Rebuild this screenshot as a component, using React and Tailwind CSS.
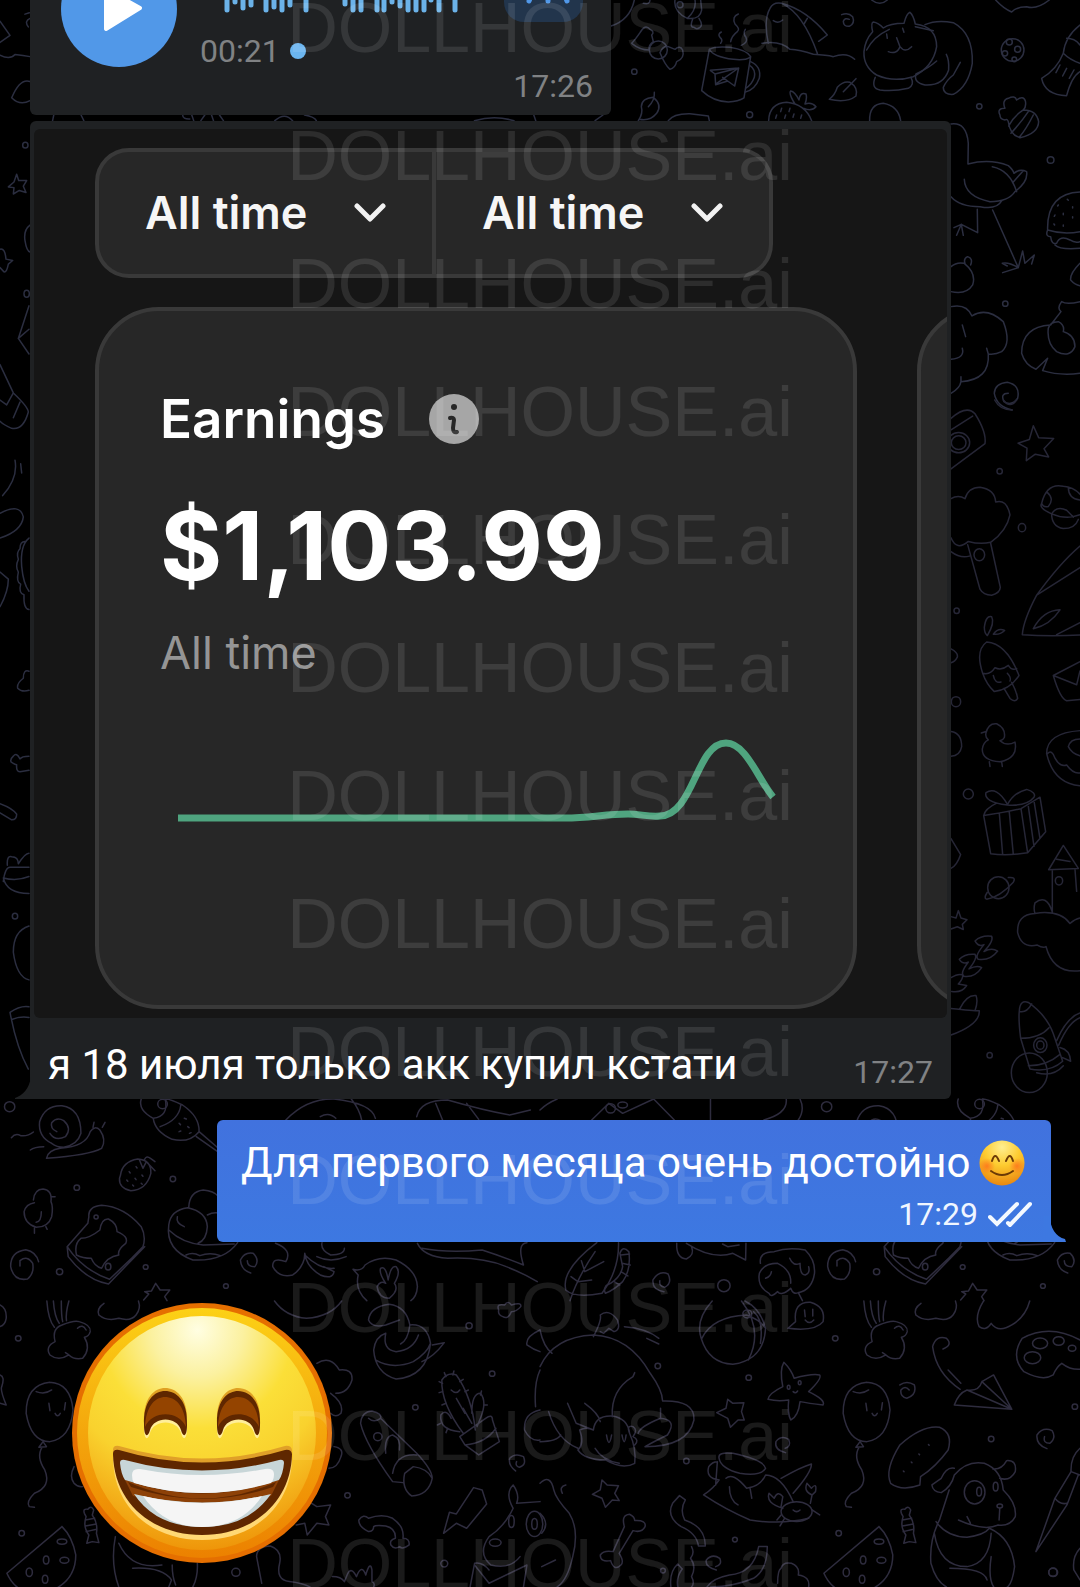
import React, { useState } from 'react';

// Wallpaper doodles, one sheet per area of the chat background
const topSheet = {
  paths: [
    'M725 44 Q745 36 758 50 Q766 70 748 79 Q730 80 730 64 Q735 52 748 58',
    'M95 130 Q105 120 120 98 Q135 70 150 88 Q165 95 155 105 L160 125 Q145 135 147 150 Q120 150 95 130Z',
    'M180 158 Q190 135 205 140 L225 148 Q240 135 248 150 Q255 175 230 185 Q225 205 210 208 Q195 195 180 158Z',
    'M328 148 L305 272 Q340 305 385 306 Q415 305 432 294 L452 170 Q440 150 390 142 Q345 138 328 148 Q340 170 400 178 Q435 182 450 172',
    'M452 185 Q485 200 478 235 Q465 270 436 276 M449 196 Q468 208 463 232 Q455 255 438 264',
    'M331 211 L416 204 L404 258 L383 243 L347 254 L345 222Z M345 222 L416 204 L350 250 M368 232 L383 243',
    'M362 130 Q370 120 360 112 Q352 102 364 96 M392 125 Q395 108 412 95 Q422 88 405 72 Q395 50 415 42 M424 136 Q445 128 438 112 Q428 100 436 88',
    'M505 130 Q490 60 510 25 Q520 5 545 10 Q610 40 652 160 M545 10 Q620 30 682 105 L656 124 M612 72 L622 55 M486 130 Q540 120 570 148 Q600 150 640 163 Q680 165 700 170 Q740 155 764 178 M520 62 Q535 72 548 60',
    'M818 95 Q812 68 820 66 Q835 68 850 84 Q870 70 912 70 Q920 40 930 37 Q940 45 946 72 Q1010 80 1010 140 Q1000 200 940 230 Q880 248 830 225 Q790 200 792 155 Q795 120 818 95',
    'M975 74 Q1010 58 1060 68 Q1120 100 1117 190 Q1105 260 1060 283 Q1030 285 1030 262 Q1040 240 1060 225 L1081 187 M1010 183 Q985 205 948 222 Q940 248 975 255 Q1030 258 1046 210 Q1048 180 1039 163',
    'M826 232 Q812 265 840 270 Q880 275 925 265 Q945 255 933 232 M890 113 L900 140 Q890 165 865 155 M900 140 Q915 160 935 140 M860 102 L862 115 M908 85 L912 97 M800 150 Q820 110 868 88 M946 80 L1000 92',
    'M1440 75 Q1395 110 1390 160 Q1370 210 1325 235 Q1335 285 1400 287 Q1415 230 1440 215 M1400 115 Q1425 115 1440 135 M1390 160 Q1410 180 1440 190 M1380 195 L1368 218 M1400 205 L1388 228 M1422 210 L1408 235',
    'M1187 0 Q1210 25 1235 36 Q1250 20 1280 20 Q1310 30 1348 0 M815 0 Q840 20 862 0 M33 78 Q90 60 103 0 M130 10 Q150 15 150 0',
    'M225 0 Q220 35 262 55 Q300 60 305 30 L302 0 M262 55 Q290 30 285 0 M278 58 Q268 82 282 82 Q290 90 300 82 Q310 75 297 55',
    'M115 362 Q130 340 124 320 Q125 295 160 292 Q188 315 170 340 Q150 365 118 358 M163 277 Q165 300 145 320',
    'M205 362 Q220 340 270 341 L325 348 L328 362 M506 362 Q508 310 560 307 Q615 312 635 362 M585 312 Q565 280 572 273 Q585 275 597 300 Q600 275 618 282 Q622 295 615 312 Q635 305 648 320 Q635 335 612 325',
    'M545 325 L542 335 M570 325 L567 335 M530 345 L527 355 M557 345 L554 355 M582 342 L579 352 M605 345 L602 355',
    'M688 298 Q705 285 712 262 Q730 242 750 247 Q775 262 768 288 Q740 310 688 298 M768 236 L730 275 M809 362 Q808 312 850 310 Q895 318 902 362',
    'M1200 345 Q1190 325 1215 325 Q1205 300 1225 295 Q1245 285 1250 300 Q1270 285 1276 302 Q1280 320 1270 330 Q1310 330 1316 365 Q1315 400 1260 413 Q1230 405 1225 365 Q1222 355 1215 360 Q1200 358 1200 345Z M1270 330 Q1240 350 1226 378 M1285 335 Q1265 365 1233 400 M1300 345 Q1280 385 1258 412',
    'M1053 372 Q1100 365 1105 430 L1104 492 Q1170 475 1225 497 Q1240 510 1242 520 Q1260 505 1280 515 Q1285 545 1245 575 Q1225 605 1170 605 Q1095 590 1093 538 M1053 590 Q1080 620 1140 620 Q1190 630 1205 603 M1177 500 Q1230 510 1250 575 M1238 548 L1270 512',
    'M1132 628 L1133 698 L1084 673 L1062 683 M1084 673 L1070 706 M1084 673 L1090 706 M1178 630 L1255 803 Q1225 785 1207 790 L1222 798 M1255 803 L1208 818 M1255 803 L1268 753 L1275 790 L1303 765 L1295 792',
    'M1440 576 Q1340 580 1343 690 Q1390 705 1440 695 M1343 690 Q1335 710 1352 710 Q1355 735 1370 730 Q1380 705 1410 720 Q1425 730 1440 725 M1365 735 Q1380 750 1440 745 M1375 615 L1373 618 M1402 598 L1405 601 M1365 645 L1363 649 M1390 640 L1390 644 M1418 620 L1418 624 M1362 672 L1364 675 M1390 675 L1390 679 M1418 650 L1418 654',
    'M1053 800 Q1070 785 1093 790 Q1130 820 1118 855 Q1100 885 1053 875 M1095 790 Q1090 775 1103 770 Q1120 775 1112 795 M1440 790 Q1410 820 1412 840 Q1425 855 1440 857',
    'M1053 920 Q1100 910 1116 948 Q1160 920 1210 965 Q1235 1030 1205 1055 Q1185 1065 1165 1062 Q1170 1140 1083 1145 Q1080 1165 1053 1180 M1087 975 L1097 1010 M1087 1045 Q1095 1075 1053 1078 M1083 1130 L1083 1145 M1160 1045 L1165 1062',
    'M1440 905 Q1400 915 1385 905 Q1370 925 1383 935 L1352 975 Q1265 980 1265 1060 Q1275 1095 1308 1108 L1343 1075 L1328 1112 Q1380 1128 1440 1120 M1345 985 Q1350 965 1375 965 Q1395 975 1390 995 Q1425 1005 1425 1040 Q1410 1075 1370 1055 Q1340 1030 1345 985',
    'M1237 1230 Q1190 1220 1183 1180 Q1185 1150 1222 1147 Q1262 1155 1253 1195 Q1235 1220 1212 1205 Q1200 1180 1225 1180',
  ],
  rounds: [
    [103, 215, 8, 8], [449, 344, 9, 9], [1138, 319, 8, 8], [1352, 480, 10, 10], [1216, 911, 8, 8],
    [175, 150, 27, 27], [240, 14, 9, 9], [1238, 150, 34, 34], [1228, 126, 9, 9], [1253, 148, 9, 9], [1215, 160, 8, 8], [1243, 178, 7, 7],
  ],
};

const rightSheet = {
  paths: [
    'M153 40 Q200 10 225 30 Q260 70 255 95 L153 150 M153 65 L218 35 M284 0 Q300 22 336 22 M310 0 Q330 20 350 0',
    'M400 56 L416 82 L461 84 L432 106 L446 124 L406 118 L379 132 L381 105 L354 94 L388 86Z',
    'M540 250 Q500 262 455 248 Q415 235 425 225 Q440 180 490 188 Q520 190 540 205 M455 248 Q455 275 490 280 Q525 280 535 260 M455 248 Q470 230 500 240 L520 255 M440 200 Q465 215 445 232 Q430 235 425 225 M505 190 Q505 215 540 218',
    'M153 215 Q175 205 195 215 Q205 190 240 190 Q285 195 287 222 Q320 215 330 250 Q320 285 272 310 Q240 315 205 308 Q170 330 153 300 M203 315 L240 412 Q250 425 275 425 Q300 420 301 408 L272 312 M153 330 Q180 345 208 340',
    'M540 318 Q480 355 410 425 Q370 480 367 511 Q440 515 540 512 M410 425 L540 365 M470 511 L540 485 M400 498 Q430 458 480 457 Q450 490 400 498',
    'M248 595 Q225 545 260 527 Q320 530 357 600 Q330 630 283 635 Q260 620 248 595 Q270 600 285 583 Q305 590 325 578 Q335 590 350 585 M312 628 L330 650 Q345 660 353 650 Q350 635 335 615',
    'M253 495 Q258 468 275 472 Q285 485 262 513 Q253 508 253 495 M280 510 Q295 495 314 502 Q300 512 280 510 M280 600 Q285 618 303 614 M322 595 Q335 605 330 612',
    'M540 570 L460 600 Q480 650 500 655 L540 652 M460 600 L530 620 L540 590 M153 542 Q175 550 172 560 Q165 570 153 572 M153 722 Q185 725 185 755 Q180 775 153 776 M153 955 L182 990 Q170 1015 153 1020',
    'M258 725 Q265 703 290 705 Q318 715 313 735 Q310 740 300 742 Q320 755 345 745 Q355 780 300 788 Q245 785 247 760 Q250 745 265 740 Q255 735 258 725 M244 725 L258 722 M268 788 L270 798 M305 788 L307 798',
    'M540 720 Q440 725 440 770 Q460 835 540 840 M540 738 Q510 738 505 755 Q515 770 540 775 M443 770 Q455 760 465 780 Q480 800 500 795 Q520 815 540 812',
    'M251 905 L272 988 Q320 993 383 986 L437 940 L420 865 L363 890 Q300 900 251 905 Q255 890 290 878 M322 880 Q290 840 258 855 Q250 875 322 882 Q340 855 380 848 Q410 855 402 865 Q380 885 322 882 M298 900 L308 990 M328 898 L340 990 M363 890 L383 986 M385 885 L402 972 M402 873 L420 955',
    'M262 1072 Q250 1085 260 1087 Q300 1082 340 1050 Q350 1038 325 1040',
    'M446 1023 L490 970 L535 1020Z M457 1023 L457 1115 M525 1022 L530 1070 M470 1000 L510 1005 M457 1115 Q440 1075 405 1095 Q400 1108 405 1118 Q350 1120 353 1160 Q365 1195 412 1187 Q430 1195 438 1190 Q460 1250 540 1243 M405 1118 Q480 1110 510 1140 Q525 1130 540 1128',
    'M153 1125 L168 1128 L175 1112 L183 1128 L201 1132 L187 1142 L190 1153 L172 1147 L153 1152',
    'M225 1178 Q245 1165 275 1168 Q282 1178 252 1201 Q275 1192 293 1200 Q270 1222 235 1218 Q222 1212 252 1186 Q235 1192 225 1178Z M178 1218 Q195 1205 225 1207 Q234 1215 207 1239 Q230 1230 245 1236 Q225 1258 192 1255 Q178 1250 205 1224 Q188 1230 178 1218Z M153 1258 Q175 1248 188 1252 Q190 1260 175 1272 L200 1275 Q185 1292 155 1288',
    'M153 1325 Q220 1330 238 1330 Q240 1360 153 1383 M180 1325 Q200 1295 228 1297 Q235 1310 225 1330',
    'M358 1330 Q360 1305 385 1312 Q440 1340 460 1380 L488 1440 Q450 1465 390 1457 L362 1390 Q355 1350 358 1330 M360 1332 Q380 1335 395 1315 M362 1390 Q420 1390 447 1367 M385 1450 Q440 1450 480 1425 M480 1410 Q510 1415 512 1440 L488 1432 M410 1465 Q460 1475 490 1450 M470 1395 Q500 1345 540 1335 M476 1405 Q505 1355 540 1345',
  ],
  rounds: [
    [176, 93, 33, 22], [176, 93, 22, 15], [238, 337, 16, 13], [295, 1062, 32, 24], [477, 1047, 11, 9],
    [421, 1405, 20, 16], [421, 1405, 11, 9], [388, 1465, 54, 43],
    [299, 155, 8, 6], [366, 278, 11, 9], [170, 459, 8, 6], [168, 657, 14, 11], [205, 858, 15, 11], [269, 1427, 8, 6],
  ],
};

const leftSheet = {
  paths: [
    'M0 30 L30 50 L0 60 M0 78 Q30 85 45 77 Q70 78 90 80 M35 138 Q60 110 90 115 M35 138 Q60 150 90 142 M75 20 L88 18 M90 26 Q72 30 85 38',
    'M50 246 L56 255 L80 255 L70 263 L78 272 L58 269 L40 274 L42 265 L25 264 L42 257Z',
    'M0 352 Q15 350 18 366 L38 368 L25 373 Q20 385 12 384 L0 378 M90 318 Q70 325 75 340 Q80 355 90 356 M87 432 L55 478 L87 500 M55 478 L87 465',
    'M0 515 L40 555 Q85 575 85 582 Q70 608 35 605 Q10 600 0 595 M40 555 L20 572 L0 565 M60 568 L40 590 M45 650 Q55 675 8 700 M62 655 L65 668',
    'M0 725 Q60 710 70 730 Q65 750 0 760 M0 808 L25 818 Q25 835 0 857',
    'M87 760 Q60 770 65 800 Q70 825 87 835 M75 765 Q60 765 60 775 Q48 780 55 790 Q45 800 55 808 Q48 822 62 825 Q55 838 72 840 Q70 860 87 861',
    'M87 948 Q70 945 70 958 Q50 965 53 972 Q65 978 87 975 M87 1068 Q65 1068 60 1072 Q50 1062 40 1068 Q30 1072 33 1076 Q45 1080 50 1080 Q48 1090 60 1090 L87 1088',
    'M0 1135 Q40 1142 50 1150 Q50 1158 35 1158 L0 1148 M22 1222 Q20 1208 35 1210 Q55 1210 55 1220 Q75 1205 87 1205 M10 1245 Q15 1225 30 1225 L87 1225 M10 1240 Q20 1262 87 1262 M10 1240 Q50 1245 87 1238',
    'M87 1308 Q40 1315 40 1345 Q50 1380 87 1384 M87 1422 Q60 1420 30 1430 Q50 1480 85 1510 M35 1440 Q60 1435 87 1437',
  ],
  rounds: [[76, 205, 8, 4], [80, 415, 8, 5], [45, 1294, 8, 4]],
};

const gapSheet = {
  paths: [
    'M133 362 L136 345 M205 345 L212 362 M462 345 Q462 358 480 357 M485 345 L490 362 M508 362 L518 345 M535 345 L540 362 M555 345 L565 362 M695 362 Q720 335 740 362 M770 345 Q795 350 800 362 M1200 362 Q1250 345 1300 362 M1350 345 L1355 362 M1505 362 L1525 345',
  ],
  rounds: [],
};

// Drawn twice, the wallpaper repeats sideways
const tileSheet = {
  paths: [
    'M135 205 Q140 180 175 175 Q250 170 262 125 Q275 105 290 120 Q310 150 295 175 Q260 195 135 205 M270 112 L273 97 M297 112 L305 97 M150 160 Q110 140 115 95 Q130 45 180 47 Q235 55 235 130 Q225 165 185 172 Q165 172 150 160 M165 125 Q145 115 150 98 Q165 80 185 92 Q210 115 190 140 Q160 155 145 130 M33 143 Q45 128 60 137 Q80 140 97 126 M88 180 Q100 170 127 170',
    'M410 27 Q400 60 445 85 Q450 125 500 148 Q550 160 578 125 Q580 80 530 45 Q490 25 480 27 M445 85 Q490 80 480 27 M465 110 Q520 90 525 45 M578 125 L640 180 M570 140 L632 185 M520 100 L524 104 M535 85 L541 87 M545 110 L549 113 M520 125 L525 123 M550 130 L555 128',
    'M350 255 Q355 215 400 207 Q440 210 438 250 Q425 300 380 302 Q345 295 347 265Z M405 210 L415 235 L425 215 L450 242 M420 208 Q425 195 437 205 L450 215 M375 245 L378 249 M395 230 L398 234 M368 270 L371 274 M392 265 L395 269 M412 255 L415 259 M385 285 L388 288 M410 280 L413 283',
    'M97 330 Q100 298 125 297 Q152 300 148 335 Q155 350 150 380 Q140 412 105 412 Q70 400 70 365 Q75 342 100 338 M148 320 L160 320 M120 365 Q120 395 105 397 M100 415 L100 430 M133 410 L137 418',
    'M258 380 Q255 350 295 346 Q360 350 410 410 Q425 440 415 470 L382 505 L318 568 Q240 540 195 470 L255 400Z M195 470 L198 500 Q250 570 315 582 L420 470 M290 420 Q295 385 315 387 Q340 400 340 425 Q375 440 365 460 Q340 480 345 495 Q310 500 295 535 Q275 530 265 505 Q240 505 222 495 Q215 460 235 445 Q260 445 290 420',
    'M548 352 Q550 305 590 300 Q620 302 635 320 M490 405 Q495 360 545 353 Q600 365 602 410 Q600 450 575 460 M490 405 Q480 480 560 510 Q650 515 690 458 M490 420 Q530 460 590 465 L680 462 M540 495 Q560 485 580 497 Q610 485 640 497 M602 375 Q620 365 640 370 M515 380 Q510 400 535 410',
    'M80 567 Q40 575 31 530 Q30 485 75 479 Q105 485 112 515 M80 567 Q100 550 95 520 Q80 495 58 512 L58 528',
    'M728 549 Q700 540 698 510 Q710 485 735 490 Q755 510 740 530 Q718 530 718 512',
    'M417 630 L432 612 L420 605 L440 603 L452 580 L465 600 L493 600 L478 620 L485 632',
    'M136 633 Q140 690 158 712 M155 633 Q158 680 172 700 M178 633 Q178 680 182 695 M200 633 Q190 670 193 692',
    'M160 755 Q150 715 180 705 Q215 690 230 695 Q265 705 262 725 Q258 740 245 742 Q265 775 240 805 Q215 810 200 795 Q170 815 145 795 Q130 770 160 755 M225 715 Q240 700 250 720 M190 788 L200 795',
    'M302 640 Q280 655 287 675 Q310 695 345 685 Q380 695 395 675 Q410 655 402 633',
    'M145 877 Q75 885 76 970 Q90 1055 145 1055 Q205 1045 212 960 Q205 880 145 877 M105 905 Q130 915 150 900 M142 940 L145 962 M190 938 L187 960 M160 970 Q167 985 175 970 M125 1055 L113 1072 L135 1070Z M122 1072 Q105 1100 130 1140 Q150 1190 100 1210 Q75 1235 85 1250 L100 1252',
    'M245 1270 Q240 1255 255 1258 Q265 1245 272 1260 L268 1275 Q285 1300 280 1330 L287 1358 L268 1355 L252 1360 L258 1335 Q240 1310 250 1280Z M248 1290 L275 1285 M248 1308 L280 1302 M250 1325 L280 1318',
    'M180 1310 L20 1450 Q50 1520 130 1510 Q220 1480 220 1395 Q210 1340 180 1310',
  ],
  rounds: [
    [472, 42, 14, 14], [279, 381, 6, 6], [314, 530, 8, 10],
    [180, 1355, 14, 8], [134, 1410, 8, 12], [187, 1411, 13, 9], [85, 1447, 9, 13], [131, 1468, 8, 12],
    [28, 50, 15, 15], [223, 293, 8, 8], [502, 267, 8, 8], [173, 545, 9, 9], [423, 531, 7, 7], [656, 588, 7, 7],
    [53, 745, 8, 8], [63, 1330, 8, 8], [685, 1447, 12, 12],
  ],
};

const bottomLeftSheet = {
  paths: [
    'M830 90 Q890 25 970 27 Q1080 40 1090 85 M930 80 Q955 65 975 85 M1020 27 Q1045 60 1050 90 M1210 80 Q1220 30 1300 30 Q1400 60 1480 75 L1540 60 M1265 40 L1285 90 M1355 40 L1390 88',
    'M800 460 Q850 480 830 515 Q790 500 792 530 Q810 565 850 555 Q885 530 885 490 Q890 530 930 555 Q965 570 970 545 L940 530 M885 495 Q930 540 970 535 M935 458 Q930 480 960 495 Q1000 495 1000 475 M920 500 Q960 520 1005 500',
    'M1212 460 Q1230 500 1300 505 Q1400 500 1470 530 Q1520 550 1560 575 M1225 475 Q1300 490 1400 480 Q1460 500 1520 525 Q1500 460 1530 458',
    'M1065 632 Q1030 600 1040 555 L1025 538 Q1050 545 1060 525 Q1100 495 1150 510 Q1210 540 1212 590 Q1210 620 1193 632 M1120 580 Q1100 550 1105 535 Q1120 525 1127 570 Q1135 525 1150 530 Q1165 545 1145 580 Q1160 600 1130 625 Q1100 625 1095 590 Q1105 570 1120 580',
    'M797 633 Q830 680 890 685 Q960 680 992 633',
    'M1070 690 Q1075 650 1130 643 Q1180 650 1190 705 Q1240 700 1250 760 Q1240 860 1150 867 Q1090 850 1085 780 Q1090 740 1120 730 M1070 690 Q1080 715 1120 705 L1160 690 M1190 705 Q1185 750 1163 762 M1120 730 Q1110 780 1150 785 Q1200 780 1215 735 M1090 810 Q1140 840 1200 815 Q1240 790 1250 760 M1225 815 Q1260 800 1290 758 L1255 765',
    'M1345 1030 Q1280 940 1283 870 Q1300 845 1325 855 Q1370 920 1380 1020 M1370 970 Q1370 910 1395 910 Q1415 935 1395 985 L1385 1010 M1335 1025 Q1275 1020 1280 975 Q1295 955 1310 985 M1335 1040 L1350 1065 L1390 1095 L1450 1055 L1430 990 Q1430 970 1410 985 L1335 1040 M1350 1065 Q1410 1060 1440 1015',
    'M1285 880 L1275 875 M1295 860 L1290 848 M1315 855 L1318 843 M1335 875 L1345 868 M1350 905 L1360 900 M1285 905 L1275 908 M1295 940 L1283 945 M1325 925 L1350 970 M1345 955 L1370 1000 M1310 900 Q1325 915 1335 900 M1395 915 L1398 903 M1405 945 L1415 945 M1280 1000 L1270 1005 M1300 1015 L1295 1028',
    'M1047 1000 Q1050 965 1080 963 Q1110 970 1105 985 L1210 1090 Q1255 1140 1255 1165 Q1245 1215 1195 1218 Q1165 1195 1175 1150 L1200 1130 Q1240 1135 1255 1165 M1047 1000 Q1060 1060 1140 1175 L1170 1178 M1140 1150 Q1150 1090 1210 1095 M1070 985 Q1085 1000 1105 985 M1120 1090 Q1115 1040 1140 1035 Q1165 1045 1160 1080',
    'M920 820 Q960 795 985 840 Q1025 835 1022 870 Q1010 910 975 910 M960 910 Q1000 940 990 970 Q975 985 960 970 M970 1070 Q1000 1075 990 1100 Q980 1135 955 1135 M215 1130 Q200 1160 215 1180 Q225 1192 240 1190',
    'M905 1240 L920 1250 L960 1245 L945 1280 L955 1305 L920 1300 L892 1335 L885 1300 L860 1305',
    'M1070 1325 Q1040 1310 1042 1290 Q1055 1270 1070 1285 Q1110 1270 1140 1285 Q1175 1310 1170 1345 Q1190 1345 1188 1365 Q1170 1380 1160 1370 Q1145 1380 1135 1365 Q1130 1350 1148 1345 Q1150 1315 1120 1308 Q1090 1305 1085 1310 Q1085 1325 1070 1325Z',
    'M1288 1330 L1305 1267 L1325 1272 L1375 1193 L1400 1200 L1413 1242 L1355 1315 L1325 1300Z',
    'M1490 1255 Q1465 1210 1490 1185 Q1510 1215 1500 1240 L1568 1235 M1490 1255 Q1465 1310 1420 1340 Q1385 1390 1425 1425 Q1480 1440 1510 1400 M1365 1491 L1378 1420 Q1400 1415 1420 1440 M1378 1425 L1420 1480 L1530 1425 L1520 1491',
    'M965 1460 Q990 1460 1000 1475 L1010 1450 Q1020 1430 1035 1460 Q1050 1420 1062 1455 Q1075 1410 1080 1440 L1080 1475 Q1090 1480 1085 1491',
    'M745 1400 Q745 1370 785 1368 Q820 1380 812 1420 Q800 1470 840 1475 Q880 1480 900 1491 M745 1400 L760 1480 M335 1340 Q320 1420 345 1491 M345 1360 Q380 1440 470 1425 M385 1435 Q470 1430 498 1470 L490 1491 M500 1425 Q500 1460 510 1485 M573 1420 Q575 1460 560 1491',
    'M1497 1143 Q1475 1125 1480 1105 Q1495 1088 1520 1100 Q1530 1125 1508 1132 Q1495 1128 1500 1115 M1448 660 Q1440 640 1465 645 Q1475 630 1485 645 Q1515 635 1512 650 Q1500 665 1485 665 Q1475 690 1460 680 Q1445 675 1448 660',
    'M1568 720 Q1525 740 1530 765 Q1550 780 1568 785 M1568 960 Q1520 970 1523 1020 Q1540 1055 1568 1050 M1568 840 Q1550 880 1555 950 M0 645 Q20 655 18 685 Q15 705 0 710 M0 855 Q15 860 5 890 Q0 900 18 945 L0 940',
  ],
  rounds: [
    [1097, 1040, 12, 12], [1438, 1358, 17, 11], [1485, 1295, 8, 18], [1552, 1302, 24, 38], [1552, 1302, 8, 16],
    [1362, 707, 9, 9], [1429, 851, 8, 8], [1206, 952, 8, 8], [1009, 1216, 8, 8], [1290, 1421, 10, 10],
  ],
};

const bottomRightSheet = {
  paths: [
    'M0 60 Q20 40 50 27 M150 90 L200 40 L240 70 L330 27 L390 90 M495 27 L495 90 M650 90 Q720 70 715 27 M755 27 Q770 60 750 90',
    'M165 458 Q60 540 75 600 Q100 625 180 610 Q230 540 228 458 M87 632 Q110 560 160 485 M120 512 L130 545 L185 515 M90 560 L110 575 L150 570',
    'M190 610 Q180 590 205 580 Q235 560 240 530 L232 490 Q240 465 258 485 Q265 540 240 575 Q215 600 190 610 M235 495 L260 492 M238 520 L262 525 M235 545 L255 558 M215 575 L232 585',
    'M360 605 Q325 600 328 570 Q345 540 372 552 Q385 580 362 592 Q345 590 348 572',
    'M397 460 Q395 505 425 507 Q450 495 440 470 M425 460 Q500 510 560 490 L597 510 L598 460 M530 462 L545 470 L578 465',
    'M640 520 Q635 485 680 485 Q720 470 770 480 Q800 510 797 550 Q790 600 750 608 Q735 615 728 595 Q700 620 690 605 Q670 625 665 610 Q630 590 637 550 Q650 520 690 520 Q730 540 728 580 M725 505 Q735 530 755 520 Q755 555 770 555 Q785 550 780 530 M655 565 Q670 560 672 545 M750 608 L762 632',
    'M500 633 Q450 690 468 745 Q490 820 560 823 Q650 810 655 715 Q640 655 595 633 M470 745 Q500 680 600 675 Q640 690 655 715 M585 633 Q650 720 605 810 M620 665 Q650 690 640 760',
    'M720 715 L742 695 Q735 635 785 637 Q830 650 822 695 Q800 725 720 715 M768 660 L770 680 M792 658 L792 678 M770 690 Q782 705 795 690',
    'M0 830 Q40 740 155 735 Q260 740 320 850 Q355 900 356 933 Q450 930 447 990 Q430 1070 305 1070 Q330 1055 370 1035 Q400 990 350 985 L350 955 M350 985 Q290 1010 285 1030 M210 980 Q205 900 270 860 L275 848 M245 710 Q310 715 345 745 M310 745 L345 762 M155 740 Q180 690 175 675 Q200 655 225 690 Q235 720 215 725 L200 715 L185 730 L175 725 M0 720 Q10 770 35 790',
    'M155 1020 Q160 975 210 978 Q255 985 260 1030 Q280 1075 275 1120 Q240 1140 190 1110 Q130 1110 110 1080 Q130 1060 115 1020 Q135 1010 155 1020 M80 940 L105 1000 Q130 1010 155 1020 M130 940 Q170 970 175 995 M260 1030 Q250 1005 270 1010 Q285 1020 270 1040 Q290 1050 275 1065 M193 1035 Q200 1080 208 1035 M238 1035 Q245 1075 250 1035 M160 1075 Q180 1110 230 1120 M0 1055 Q50 1055 60 1035 M25 965 Q50 1050 110 1075',
    'M545 928 L560 940 L592 938 L585 965 L593 990 L575 990 L553 1012 L545 985 L513 968 L540 955Z',
    'M708 817 Q730 840 738 865 Q790 850 812 855 Q820 865 780 905 Q830 930 822 945 Q780 940 755 935 Q750 980 728 990 Q718 970 722 930 Q690 935 662 928 Q665 910 705 890 Q695 840 708 817Z M735 905 Q742 912 748 903',
    'M713 1088 Q680 1080 685 1055 Q700 1035 722 1048 Q730 1070 712 1075',
    'M475 1215 Q505 1195 520 1170 Q480 1165 490 1130 Q500 1115 515 1115 M520 1105 Q515 1085 560 1090 Q650 1110 655 1135 Q640 1160 580 1150 Q525 1135 520 1105 M515 1115 L510 1185 M475 1215 Q540 1260 610 1290 Q700 1305 780 1285 M700 1165 Q760 1130 788 1122 Q790 1145 735 1210 M540 1165 Q560 1145 600 1195 Q640 1190 655 1155 Q700 1155 735 1235 M610 1195 L615 1225 M550 1190 Q550 1230 575 1245',
    'M705 1255 Q655 1240 665 1210 L680 1225 Q690 1200 705 1220 L700 1250 M785 1240 L790 1215 Q765 1205 775 1180 L788 1195 Q805 1175 800 1205 L790 1215 M700 1275 L688 1290 M710 1285 L697 1308 M790 1260 L812 1275 M735 1260 Q745 1270 755 1260',
    'M1288 633 Q1260 680 1275 710 Q1295 725 1310 700 Q1330 730 1370 705 Q1410 680 1422 633',
    'M1203 945 Q1215 910 1240 900 Q1275 905 1283 875 L1317 855 L1370 958Z M1240 900 L1370 958 L1283 875 M1220 898 Q1150 850 1140 770 Q1150 735 1180 745 Q1200 765 1170 777 M1185 840 L1222 880',
    'M1568 750 Q1480 700 1400 745 Q1365 800 1405 845 Q1460 875 1490 855 Q1500 830 1515 820 Q1540 840 1568 838',
    'M1045 885 Q1065 870 1087 885 Q1095 915 1065 925 Q1045 920 1048 900 Q1060 885 1072 900 M1472 1076 Q1440 1065 1443 1035 Q1460 1010 1487 1022 Q1500 1045 1480 1060 Q1460 1060 1465 1040',
    'M1103 1185 Q1050 1205 1018 1180 Q1000 1140 1045 1065 Q1110 1005 1160 1012 Q1200 1030 1185 1080 Q1150 1130 1105 1160Z M1128 1064 L1130 1066 M1100 1092 L1102 1094 M1078 1116 L1080 1118 M1055 1143 L1057 1145',
    'M1203 1155 Q1240 1110 1290 1120 Q1340 1140 1345 1200 Q1385 1240 1380 1280 Q1365 1310 1330 1305 Q1290 1325 1215 1290 M1203 1135 Q1180 1130 1165 1165 L1138 1185 Q1140 1205 1165 1208 Q1195 1190 1203 1155 M1315 1137 Q1340 1140 1355 1112 Q1385 1110 1380 1145 Q1365 1175 1335 1165 M1335 1255 L1333 1290 M1240 1280 L1250 1300',
    'M1188 1200 L1160 1290 Q1130 1350 1135 1420 Q1150 1475 1180 1491 M1150 1295 Q1180 1340 1240 1342 Q1290 1335 1305 1315 Q1370 1345 1378 1430 Q1370 1491 1350 1495 M1145 1330 Q1160 1430 1240 1430 Q1305 1420 1310 1330 M1310 1400 Q1300 1470 1320 1495 M1190 1435 Q1290 1435 1298 1470',
    'M1568 1075 Q1540 1100 1542 1145 L1568 1155 M1542 1145 L1495 1225 L1440 1385 L1530 1245 L1563 1155 M1495 1225 Q1510 1245 1530 1240 M1568 1375 Q1545 1400 1550 1440 L1568 1470',
    'M245 1310 Q235 1275 260 1273 Q275 1280 275 1292 Q310 1290 305 1310 Q295 1330 270 1322 L230 1390 Q245 1415 235 1425 Q215 1445 205 1412 Q175 1418 175 1395 Q185 1380 212 1385Z',
    'M180 1170 L195 1185 L228 1187 L217 1210 L230 1232 L210 1230 L190 1252 L180 1225 L152 1213 L175 1200Z',
    'M405 1217 L422 1230 Q405 1260 420 1290 Q480 1310 480 1368 L460 1368 Q455 1330 410 1310 Q365 1280 385 1240Z M413 1437 Q395 1460 400 1491 M413 1437 L400 1422 Q375 1445 380 1491 M440 1370 Q450 1390 437 1405 Q455 1430 440 1460 Q450 1480 440 1491 M485 1491 Q500 1465 550 1455 Q620 1450 635 1370 L660 1370 Q660 1440 620 1465 Q560 1491 495 1491',
    'M512 1440 Q478 1430 483 1410 Q500 1390 522 1405 Q530 1425 510 1430 M690 1480 Q690 1440 700 1435 Q705 1415 730 1420 Q755 1430 750 1455 Q785 1460 780 1491',
    'M0 1180 Q30 1150 40 1200 Q45 1225 85 1270 Q115 1320 95 1400 Q80 1470 50 1491 M5 1430 L45 1410 M75 1185 Q55 1190 65 1210 M0 1270 Q30 1300 5 1330',
  ],
  rounds: [
    [205, 55, 14, 14], [240, 45, 14, 9], [534, 587, 18, 18], [602, 672, 13, 12], [722, 892, 4, 6], [754, 878, 4, 6], [745, 1265, 45, 30],
    [1430, 803, 24, 18], [1452, 760, 22, 16], [1506, 753, 16, 13], [1545, 775, 11, 9],
    [1262, 1207, 30, 35], [1275, 1205, 7, 13], [1323, 1190, 7, 13], [1335, 1248, 8, 6],
    [342, 828, 8, 8], [606, 863, 8, 8], [425, 1113, 8, 8], [566, 1349, 7, 7], [357, 1442, 7, 7], [1310, 1047, 8, 8], [1553, 950, 8, 8], [1490, 1447, 13, 13],
  ],
};

function Sheet({ sheet, transform }) {
  return (
    <g transform={transform}>
      {sheet.paths.map((d) => (
        <path key={d} d={d} vectorEffect="non-scaling-stroke" />
      ))}
      {sheet.rounds.map(([cx, cy, rx, ry]) => (
        <ellipse key={`${cx}-${cy}-${rx}`} cx={cx} cy={cy} rx={rx} ry={ry} vectorEffect="non-scaling-stroke" />
      ))}
    </g>
  );
}

function Wallpaper() {
  return (
    <svg
      className="absolute inset-0 h-full w-full"
      viewBox="0 0 1080 1587"
      preserveAspectRatio="xMinYMin slice"
      fill="none"
      strokeWidth="1.5"
      strokeLinecap="round"
      strokeLinejoin="round"
      aria-hidden="true"
    >
      <g stroke="#2b2e40">
        <Sheet sheet={topSheet} transform="translate(600 0) scale(.3333)" />
        <Sheet sheet={leftSheet} transform="scale(.3333 .708)" />
        <Sheet sheet={gapSheet} transform="scale(.3954 .3333)" />
      </g>
      <g stroke="#262636">
        <Sheet sheet={rightSheet} transform="translate(900 400) scale(.3333 .4592)" />
      </g>
      <g stroke="#2e2c3e">
        <Sheet sheet={tileSheet} transform="translate(0 1090) scale(.3444 .3333)" />
        <Sheet sheet={tileSheet} transform="translate(817 1090) scale(.3444 .3333)" />
        <Sheet sheet={bottomLeftSheet} transform="translate(0 1090) scale(.3444 .3333)" />
        <Sheet sheet={bottomRightSheet} transform="translate(540 1090) scale(.3444 .3333)" />
      </g>
    </svg>
  );
}

// [x, bottom] of every bar of the voice message
const bars = [
  [3, 12], [11, 4], [19, 10], [27, 7], [42, 12], [50, 9], [58, 12], [66, 7], [82, 12],
  [121, 6], [129, 12], [137, 12], [153, 12], [160, 12], [168, 4], [176, 8], [184, 12],
  [192, 12], [200, 12], [207, 2], [215, 12], [231, 12],
];

function VoiceMessage() {
  const [playing, setPlaying] = useState(false);

  return (
    <article className="flex w-[581px] max-w-full flex-col rounded-[6px] bg-[#1f2123] px-[18px] pt-[15px] pb-[11px]">
      <div className="flex pl-[13px]">
        <button
          type="button"
          aria-label="Play"
          onClick={() => setPlaying(!playing)}
          className="flex size-[116px] shrink-0 items-center justify-center rounded-full bg-[#5198e8]"
        >
          <svg width="116" height="116" viewBox="0 0 116 116" aria-hidden="true">
            <path d="M45 38 L79 57 L45 78Z" fill="#fff" stroke="#fff" strokeWidth="4" strokeLinejoin="round" />
          </svg>
        </button>
        <div className="flex flex-1 flex-col pl-[23px]">
          <div className="flex h-[83px] items-start justify-between pr-[10px]">
            <svg className="mt-[31px] ml-[24px]" width="240" height="32" viewBox="0 -18 240 32" stroke="#6bb2e8" strokeWidth="5" strokeLinecap="round" aria-hidden="true">
              {bars.map(([x, bottom]) => (
                <line key={x} x1={x} x2={x} y1="-14" y2={bottom - 2} />
              ))}
            </svg>
            <button type="button" aria-label="Transcribe" className="mt-[16px] h-[55px] w-[79px] shrink-0 rounded-[20px] bg-[#22354c] text-[#5198e8]">
              <svg width="79" height="55" viewBox="0 0 79 55" fill="none" stroke="currentColor" strokeWidth="5" strokeLinecap="round" aria-hidden="true">
                <path d="M25 34 L32 18 M44 18 V34 M57 18 L63 34" />
              </svg>
            </button>
          </div>
          <div className="flex h-[34px] items-center gap-[10px] text-[32px] leading-[36px] text-[#808284]">
            <span>00:21</span>
            <span className="size-[16px] rounded-full bg-[#6bb5ef]" />
          </div>
        </div>
      </div>
      <time className="self-end text-[32px] leading-[36px] text-[#808284]">17:26</time>
    </article>
  );
}

function PeriodSelect({ label, className }) {
  return (
    <label className={`relative flex h-full items-center ${className}`}>
      <select
        aria-label={label}
        className="h-full w-full cursor-pointer appearance-none bg-transparent pl-[46px] font-[Inter,sans-serif] text-[45px] font-semibold text-[#f6f6f6] outline-none"
      >
        <option>All time</option>
      </select>
      <svg className="pointer-events-none absolute right-[46px]" width="32" height="20" viewBox="0 0 32 20" fill="none" stroke="#f2f2f2" strokeWidth="5" strokeLinecap="round" strokeLinejoin="round" aria-hidden="true">
        <path d="M3 3 L16 16 L29 3" />
      </svg>
    </label>
  );
}

function InfoIcon() {
  return (
    <svg width="50" height="50" viewBox="0 0 50 50" aria-hidden="true">
      <circle cx="25" cy="25" r="25" fill="#a6a6a6" />
      <circle cx="25" cy="13" r="3" fill="#272727" />
      <path d="M21 24 Q25 23 25 26 L24 34 Q24 39 28 38" fill="none" stroke="#272727" strokeWidth="4" strokeLinecap="round" strokeLinejoin="round" />
    </svg>
  );
}

function EarningsCard() {
  return (
    <section className="w-[762px] shrink-0 rounded-[64px] border-4 border-[#393939] bg-[#272727] px-[61px] pt-[76px] pb-[165px]">
      <div className="flex items-center gap-[44px]">
        <h2 className="text-[53px] leading-[64px] font-semibold text-white">Earnings</h2>
        <button type="button" aria-label="About earnings">
          <InfoIcon />
        </button>
      </div>
      <p className="mt-[39px] text-[95px] leading-[112px] font-bold text-white">$1,103.99</p>
      <p className="mt-[23px] text-[45px] leading-[56px] text-[#959595]">All time</p>
      <svg className="mt-[40px] w-full" viewBox="0 0 632 119" fill="none" aria-hidden="true">
        <path
          d="M18 97 H405 C430 97 445 93 468 93 C480 93 488 96 500 95 C534 94 536 22 566 22 C586 22 598 58 613 76"
          stroke="#4fa47f"
          strokeWidth="7"
        />
      </svg>
    </section>
  );
}

function PhotoMessage() {
  return (
    <article className="relative mt-[6px] w-[921px] max-w-full rounded-[6px] bg-[#1f2123] px-[4px] pt-[8px] pb-[9px]">
      <svg className="absolute bottom-0 -left-[15px]" width="22" height="22" viewBox="0 0 22 22" fill="#1f2123" aria-hidden="true">
        <path d="M16 0 C14 12 8 18 0 21 V22 H22 V0Z" />
      </svg>
      <div className="overflow-hidden rounded-[6px] bg-[#161616] pt-[19px] pb-[9px] pl-[61px] font-[Inter,sans-serif]">
        <div className="flex h-[130px] w-[678px] rounded-[34px] border-4 border-[#393939] bg-[#272727]">
          <PeriodSelect label="From" className="flex-1 border-r-4 border-[#393939]" />
          <PeriodSelect label="To" className="flex-1" />
        </div>
        <div className="mt-[29px] flex gap-[60px]">
          <EarningsCard />
          <section className="w-[762px] shrink-0 rounded-[64px] border-4 border-[#393939] bg-[#272727]" />
        </div>
      </div>
      <div className="flex items-end justify-between pt-[22px] pr-[14px] pl-[14px]">
        <p className="text-[42px] leading-[50px] text-white">я 18 июля только акк купил кстати</p>
        <time className="text-[32px] leading-[36px] text-[#808284]">17:27</time>
      </div>
    </article>
  );
}

function SmileEmoji() {
  return (
    <svg className="inline-block size-[46px]" viewBox="0 0 46 46" role="img" aria-label="Smiling face">
      <defs>
        <radialGradient id="smile-face" cx=".5" cy=".15" r=".9">
          <stop offset="0" stopColor="#ffee90" />
          <stop offset=".45" stopColor="#fdcb2f" />
          <stop offset="1" stopColor="#e8800c" />
        </radialGradient>
        <radialGradient id="smile-cheek">
          <stop offset="0" stopColor="#ff6a1a" stopOpacity=".75" />
          <stop offset="1" stopColor="#ff6a1a" stopOpacity="0" />
        </radialGradient>
      </defs>
      <circle cx="23" cy="23" r="22.5" fill="url(#smile-face)" />
      <circle cx="8" cy="26" r="8" fill="url(#smile-cheek)" />
      <circle cx="38" cy="26" r="8" fill="url(#smile-cheek)" />
      <g fill="none" stroke="#6b3a06" strokeWidth="2" strokeLinecap="round">
        <path d="M13 21 Q16 11 20 21 M27 21 Q31 11 34 21 M12 31 Q23 39 34 31" />
      </g>
    </svg>
  );
}

function ReplyMessage() {
  return (
    <article className="relative mt-[21px] flex w-[834px] max-w-full flex-col self-end rounded-[6px] bg-linear-to-b from-[#4172de] to-[#3d78e1] pt-[18px] pr-[19px] pb-[10px] pl-[24px]">
      <svg className="absolute -right-[15px] bottom-0" width="22" height="26" viewBox="-6 0 22 26" fill="#3d78e1" aria-hidden="true">
        <path d="M-6 0 H0 C0 12 6 21 15 23 L16 26 H-6Z" />
      </svg>
      <p className="flex h-[50px] items-center gap-[9px] text-[42px] leading-[50px] text-white">
        Для первого месяца очень достойно
        <SmileEmoji />
      </p>
      <div className="mt-[8px] flex items-center gap-[10px] self-end text-[32px] leading-[36px] text-[#f0f6ff]">
        <time>17:29</time>
        <svg width="44" height="26" viewBox="0 0 44 26" fill="none" stroke="#f4f9ff" strokeWidth="4" strokeLinecap="round" role="img" aria-label="Read">
          <path d="M2 16 L9 23 L29 3 M20 22 L22 24 L42 3" />
        </svg>
      </div>
    </article>
  );
}

function GrinEmoji() {
  const eye = 'M72 122 C71 97 83 88 93 88 C104 88 116 97 115 122 C115 134 111 135 109 127 C105 113 82 113 78 127 C76 135 72 134 72 122Z';
  const mouth = 'M41 151 Q41 146 47 147 Q130 172 213 147 Q219 146 220 151 C219 200 180 232 130 232 S42 200 41 151Z';

  return (
    <svg className="size-[260px]" viewBox="0 0 260 260" role="img" aria-label="Grinning face">
      <defs>
        <linearGradient id="grin-rim" x1="0" y1="0" x2="0" y2="1">
          <stop offset="0" stopColor="#fcd116" />
          <stop offset=".5" stopColor="#f4a60c" />
          <stop offset="1" stopColor="#ec8100" />
        </linearGradient>
        <radialGradient id="grin-face" cx=".48" cy=".06" r="1">
          <stop offset="0" stopColor="#fffee2" />
          <stop offset=".2" stopColor="#fbf1a0" />
          <stop offset=".42" stopColor="#fbdf38" />
          <stop offset=".62" stopColor="#f9d22e" />
          <stop offset=".82" stopColor="#f3ac18" />
          <stop offset="1" stopColor="#ec8a02" />
        </radialGradient>
      </defs>
      <circle cx="130" cy="130" r="130" fill="#e56f00" />
      <circle cx="130" cy="130" r="125" fill="url(#grin-rim)" />
      <ellipse cx="130" cy="130" rx="114" ry="117" fill="url(#grin-face)" />
      {[0, 73].map((x) => (
        <g key={x} transform={`translate(${x} 0)`}>
          <path d={eye} transform="translate(0 -3)" fill="#dfa023" />
          <path d={eye} transform="translate(0 3)" fill="#ffee9a" />
          <path d={eye} fill="#5f2700" />
          <path d="M73 124 C74 102 84 94 93 94 C103 94 113 102 114 124 C107 107 80 107 73 124Z" fill="#944400" />
        </g>
      ))}
      <path d={mouth} transform="translate(0 -4)" fill="#e0a028" />
      <path d={mouth} transform="translate(0 5)" fill="#ffd874" />
      <path d={mouth} fill="#5f2700" />
      <path d="M53 177 Q130 204 207 177 L199 193 Q130 209 61 193Z" fill="#8d4107" />
      <path d="M56 179 Q130 212 204 179 L201 184 Q130 208 59 184Z" fill="#5f2700" />
      <path d="M48 160 Q48 156 53 157 Q130 178 207 157 Q212 156 212 160 Q211 171 207 177 Q130 203 53 177 Q49 171 48 160Z" fill="#c8d6d8" />
      <path d="M60 172 Q60 165 68 166 Q130 178 193 166 Q202 165 202 171 Q202 177 199 180 Q130 200 62 180 Q60 177 60 172Z" fill="#f5f5f5" />
      <path d="M62 191 Q130 208 199 191 Q176 224 130 224 T62 191Z" fill="#c8d6d8" />
      <path d="M71 193 Q130 207 190 193 Q170 224 130 224 Q92 224 71 193Z" fill="#f5f5f5" />
    </svg>
  );
}

function Watermark() {
  return (
    <div className="pointer-events-none absolute inset-0 overflow-hidden" aria-hidden="true">
      <div className="absolute inset-x-0 -top-9 -bottom-9 flex flex-col items-center justify-between font-['Liberation_Sans',Arial,sans-serif] text-[70px] leading-[128px] text-white/10">
        {Array.from({ length: 13 }, (_, i) => (
          <span key={i}>DOLLHOUSE.ai</span>
        ))}
      </div>
    </div>
  );
}

function App() {
  return (
    <main className="relative min-h-screen overflow-hidden bg-black font-[Roboto,sans-serif]">
      <Wallpaper />
      {/* The chat is scrolled, so the voice message starts above the window */}
      <div className="relative -mt-[64px] flex flex-col items-start pr-[29px] pb-[24px] pl-[30px]">
        <VoiceMessage />
        <PhotoMessage />
        <ReplyMessage />
        <div className="mt-[61px] ml-[42px]">
          <GrinEmoji />
        </div>
      </div>
      <Watermark />
    </main>
  );
}

export default App;
